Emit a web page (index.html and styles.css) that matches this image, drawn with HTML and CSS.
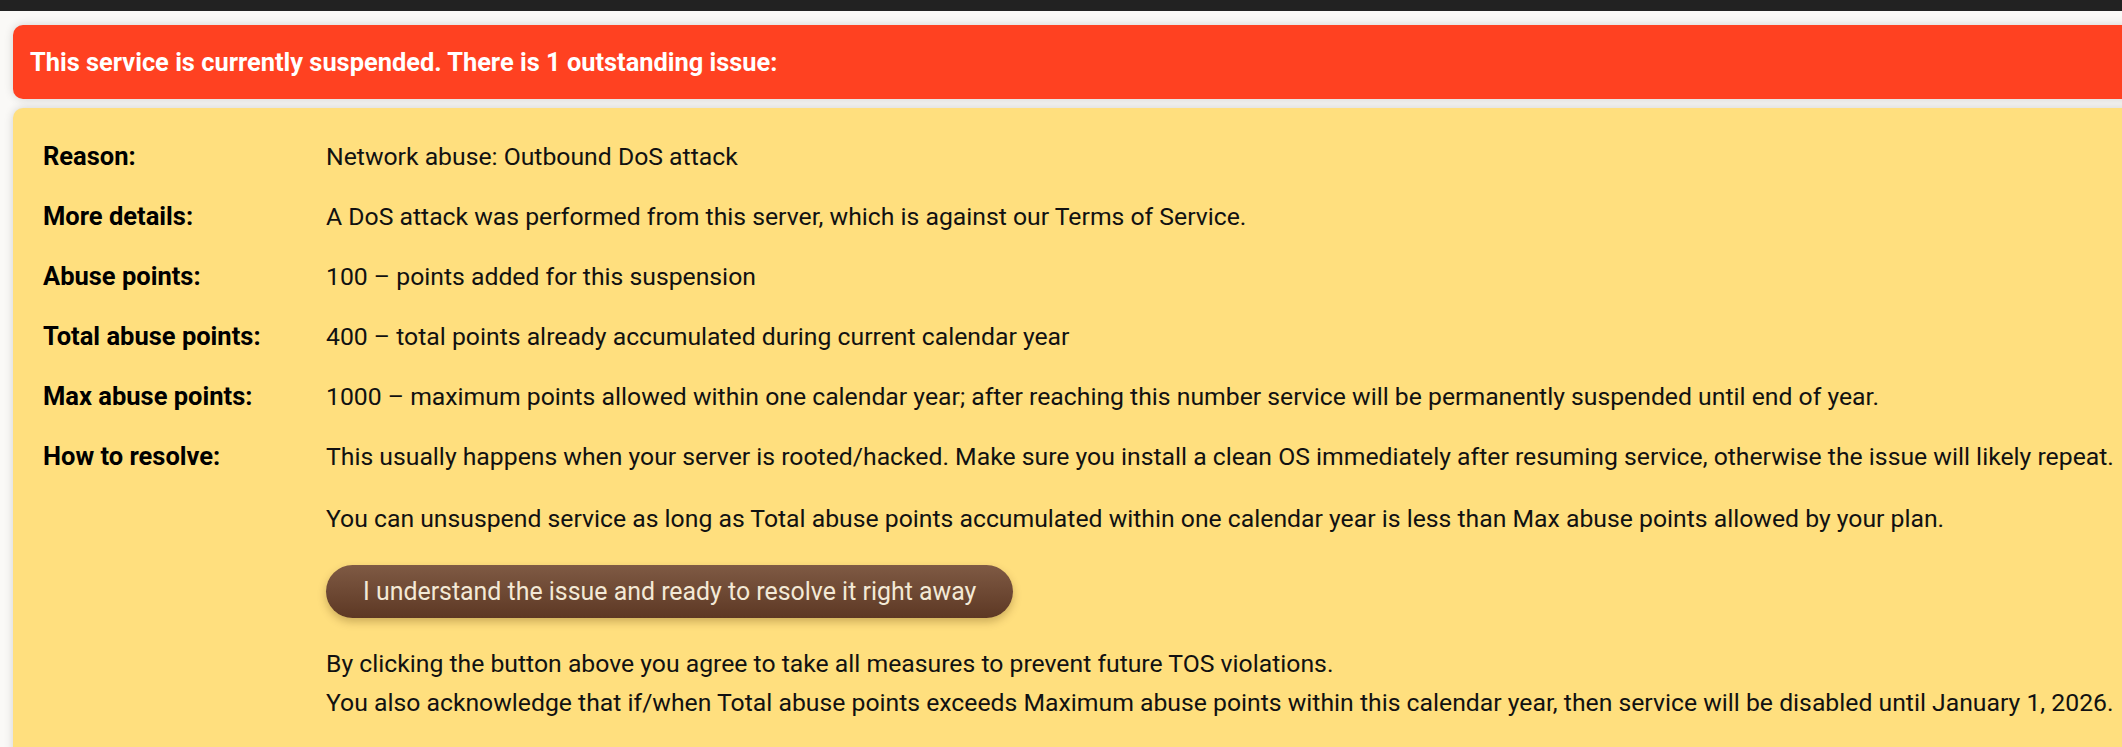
FILE: index.html
```html
<!DOCTYPE html>
<html lang="en">
<head>
<meta charset="utf-8">
<title>Service suspended</title>
<link rel="stylesheet" href="styles.css">
</head>
<body>
<div class="topbar"></div>
<main class="main">
  <div class="alert">This service is currently suspended. There is 1 outstanding issue:</div>
  <section class="issue">
    <div class="details">
      <div class="label">Reason:</div>
      <div class="value">Network abuse: Outbound DoS attack</div>

      <div class="label">More details:</div>
      <div class="value">A DoS attack was performed from this server, which is against our Terms of Service.</div>

      <div class="label">Abuse points:</div>
      <div class="value">100 – points added for this suspension</div>

      <div class="label">Total abuse points:</div>
      <div class="value">400 – total points already accumulated during current calendar year</div>

      <div class="label">Max abuse points:</div>
      <div class="value">1000 – maximum points allowed within one calendar year; after reaching this number service will be permanently suspended until end of year.</div>

      <div class="label">How to resolve:</div>
      <div class="value">
        <p class="para">This usually happens when your server is rooted/hacked. Make sure you install a clean OS immediately after resuming service, otherwise the issue will likely repeat.</p>
        <p class="para para-gap">You can unsuspend service as long as Total abuse points accumulated within one calendar year is less than Max abuse points allowed by your plan.</p>
        <button class="resolve-btn" type="button">I understand the issue and ready to resolve it right away</button>
        <p class="para agree">By clicking the button above you agree to take all measures to prevent future TOS violations.<br>You also acknowledge that if/when Total abuse points exceeds Maximum abuse points within this calendar year, then service will be disabled until January 1, 2026.</p>
      </div>
    </div>
  </section>
</main>
</body>
</html>
```
FILE: styles.css
```css
html, body {
  margin: 0;
  padding: 0;
}
body {
  background: #faf9f7;
  font-family: Roboto, "Liberation Sans", sans-serif;
  color: #111;
  overflow: hidden;
}
.topbar {
  height: 11px;
  background: #222222;
}
.main {
  padding: 14px 0 0 13px;
  overflow: hidden;
  height: 722px;
}
.alert {
  margin-right: -40px;
  height: 74px;
  line-height: 74px;
  padding-left: 17px;
  background: #ff4121;
  color: #ffffff;
  font-weight: 700;
  font-size: 25.4px;
  border-radius: 10px;
  box-shadow: 0 0 10px rgba(0, 0, 0, 0.16);
  white-space: nowrap;
}
.issue {
  margin-top: 9px;
  margin-right: -40px;
  padding: 29px 30px 60px 30px;
  background: #ffdf7e;
  border-radius: 10px;
  box-shadow: 0 0 10px rgba(0, 0, 0, 0.16);
}
.details {
  display: grid;
  grid-template-columns: 283px 1fr;
  row-gap: 21px;
  font-size: 24.75px;
  line-height: 39px;
}
.label {
  font-weight: 700;
  font-size: 25.5px;
  color: #000;
}
.value {
  color: #111;
  white-space: nowrap;
}
.para {
  margin: 0;
}
.para-gap {
  margin-top: 23px;
}
.resolve-btn {
  display: block;
  margin-top: 27px;
  height: 53px;
  padding: 0 37px;
  border: none;
  border-radius: 27px;
  background: linear-gradient(#7f5a44, #5d3824);
  color: #f3e9d6;
  font-family: Roboto, "Liberation Sans", sans-serif;
  font-size: 24.9px;
  line-height: 53px;
  box-shadow: 0 4px 8px rgba(80, 50, 0, 0.28);
  cursor: pointer;
}
.agree {
  margin-top: 26px;
}
```
